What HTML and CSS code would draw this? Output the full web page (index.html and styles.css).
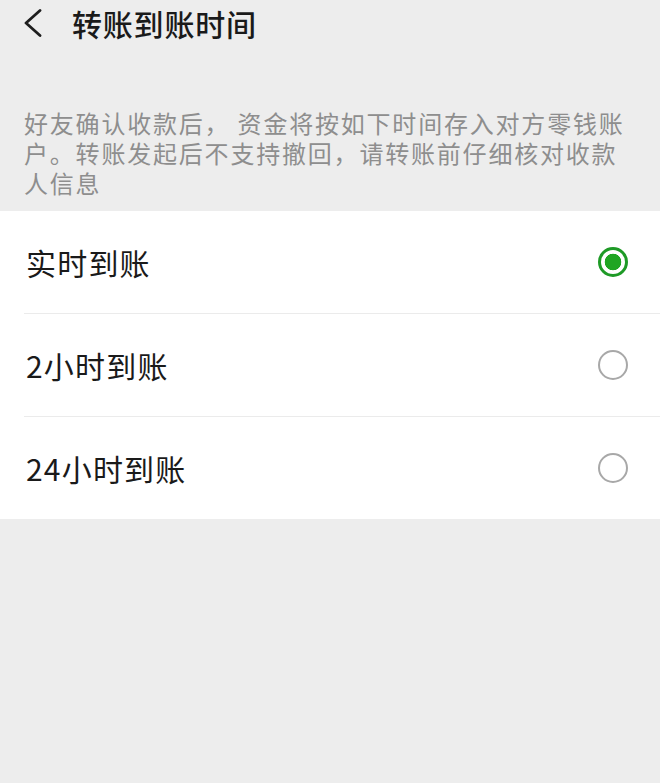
FILE: index.html
```html
<!DOCTYPE html>
<html lang="zh-CN">
<head>
<meta charset="utf-8">
<title>转账到账时间</title>
<link rel="stylesheet" href="styles.css">
</head>
<body>
<header class="header">
  <svg class="back" width="18" height="28" viewBox="0 0 18 28" aria-hidden="true">
    <polyline points="16,1.5 2,14 16,26.5" fill="none" stroke="#1e1e1e" stroke-width="2.8" stroke-linecap="round" stroke-linejoin="round"/>
  </svg>
  <h1 class="title">转账到账时间</h1>
</header>
<p class="desc"><span class="line">好友确认收款后， 资金将按如下时间存入对方零钱账</span><span class="line">户。转账发起后不支持撤回，请转账前仔细核对收款</span><span class="line">人信息</span></p>
<ul class="options">
  <li class="option"><span class="label">实时到账</span><span class="radio checked"></span></li>
  <li class="option"><span class="label">2小时到账</span><span class="radio"></span></li>
  <li class="option"><span class="label">24小时到账</span><span class="radio"></span></li>
</ul>
</body>
</html>
```
FILE: styles.css
```css
html, body {
  margin: 0;
  padding: 0;
  background: #ededed;
}
body {
  font-family: "Noto Sans CJK SC", "Noto Sans", sans-serif;
  color: #1a1a1a;
  width: 660px;
  height: 783px;
  overflow: hidden;
}
.header {
  height: 46px;
  display: flex;
  align-items: center;
  padding-left: 24px;
  gap: 30px;
}
.back {
  display: block;
  flex: none;
}
.title {
  margin: 0;
  font-size: 30px;
  font-weight: 500;
  letter-spacing: 0.8px;
  line-height: 46px;
  color: #1a1a1a;
}
.desc {
  margin: 62px 0 0;
  padding: 0 0 13px 24px;
  font-size: 24px;
  line-height: 30px;
  letter-spacing: 1.8px;
  color: #8e8e8e;
}
.line {
  display: block;
  height: 30px;
  white-space: nowrap;
}
.options {
  list-style: none;
  margin: 0;
  padding: 0;
  background: #ffffff;
}
.option {
  position: relative;
  height: 102px;
  display: flex;
  align-items: center;
  justify-content: space-between;
  padding: 0 32px 0 26px;
}
.option + .option {
  border-top: 1px solid transparent;
}
.option + .option::before {
  content: "";
  position: absolute;
  left: 24px;
  right: 0;
  top: -1px;
  height: 1px;
  background: #ebebeb;
}
.label {
  font-size: 30px;
  letter-spacing: 1.2px;
  color: #1a1a1a;
}
.radio {
  box-sizing: border-box;
  width: 30px;
  height: 30px;
  border-radius: 50%;
  border: 2px solid #a8a8a8;
  flex: none;
}
.radio.checked {
  border: 3px solid #1e9a26;
  background: radial-gradient(circle, #1fa522 0 8px, #ffffff 8.6px);
}
```
